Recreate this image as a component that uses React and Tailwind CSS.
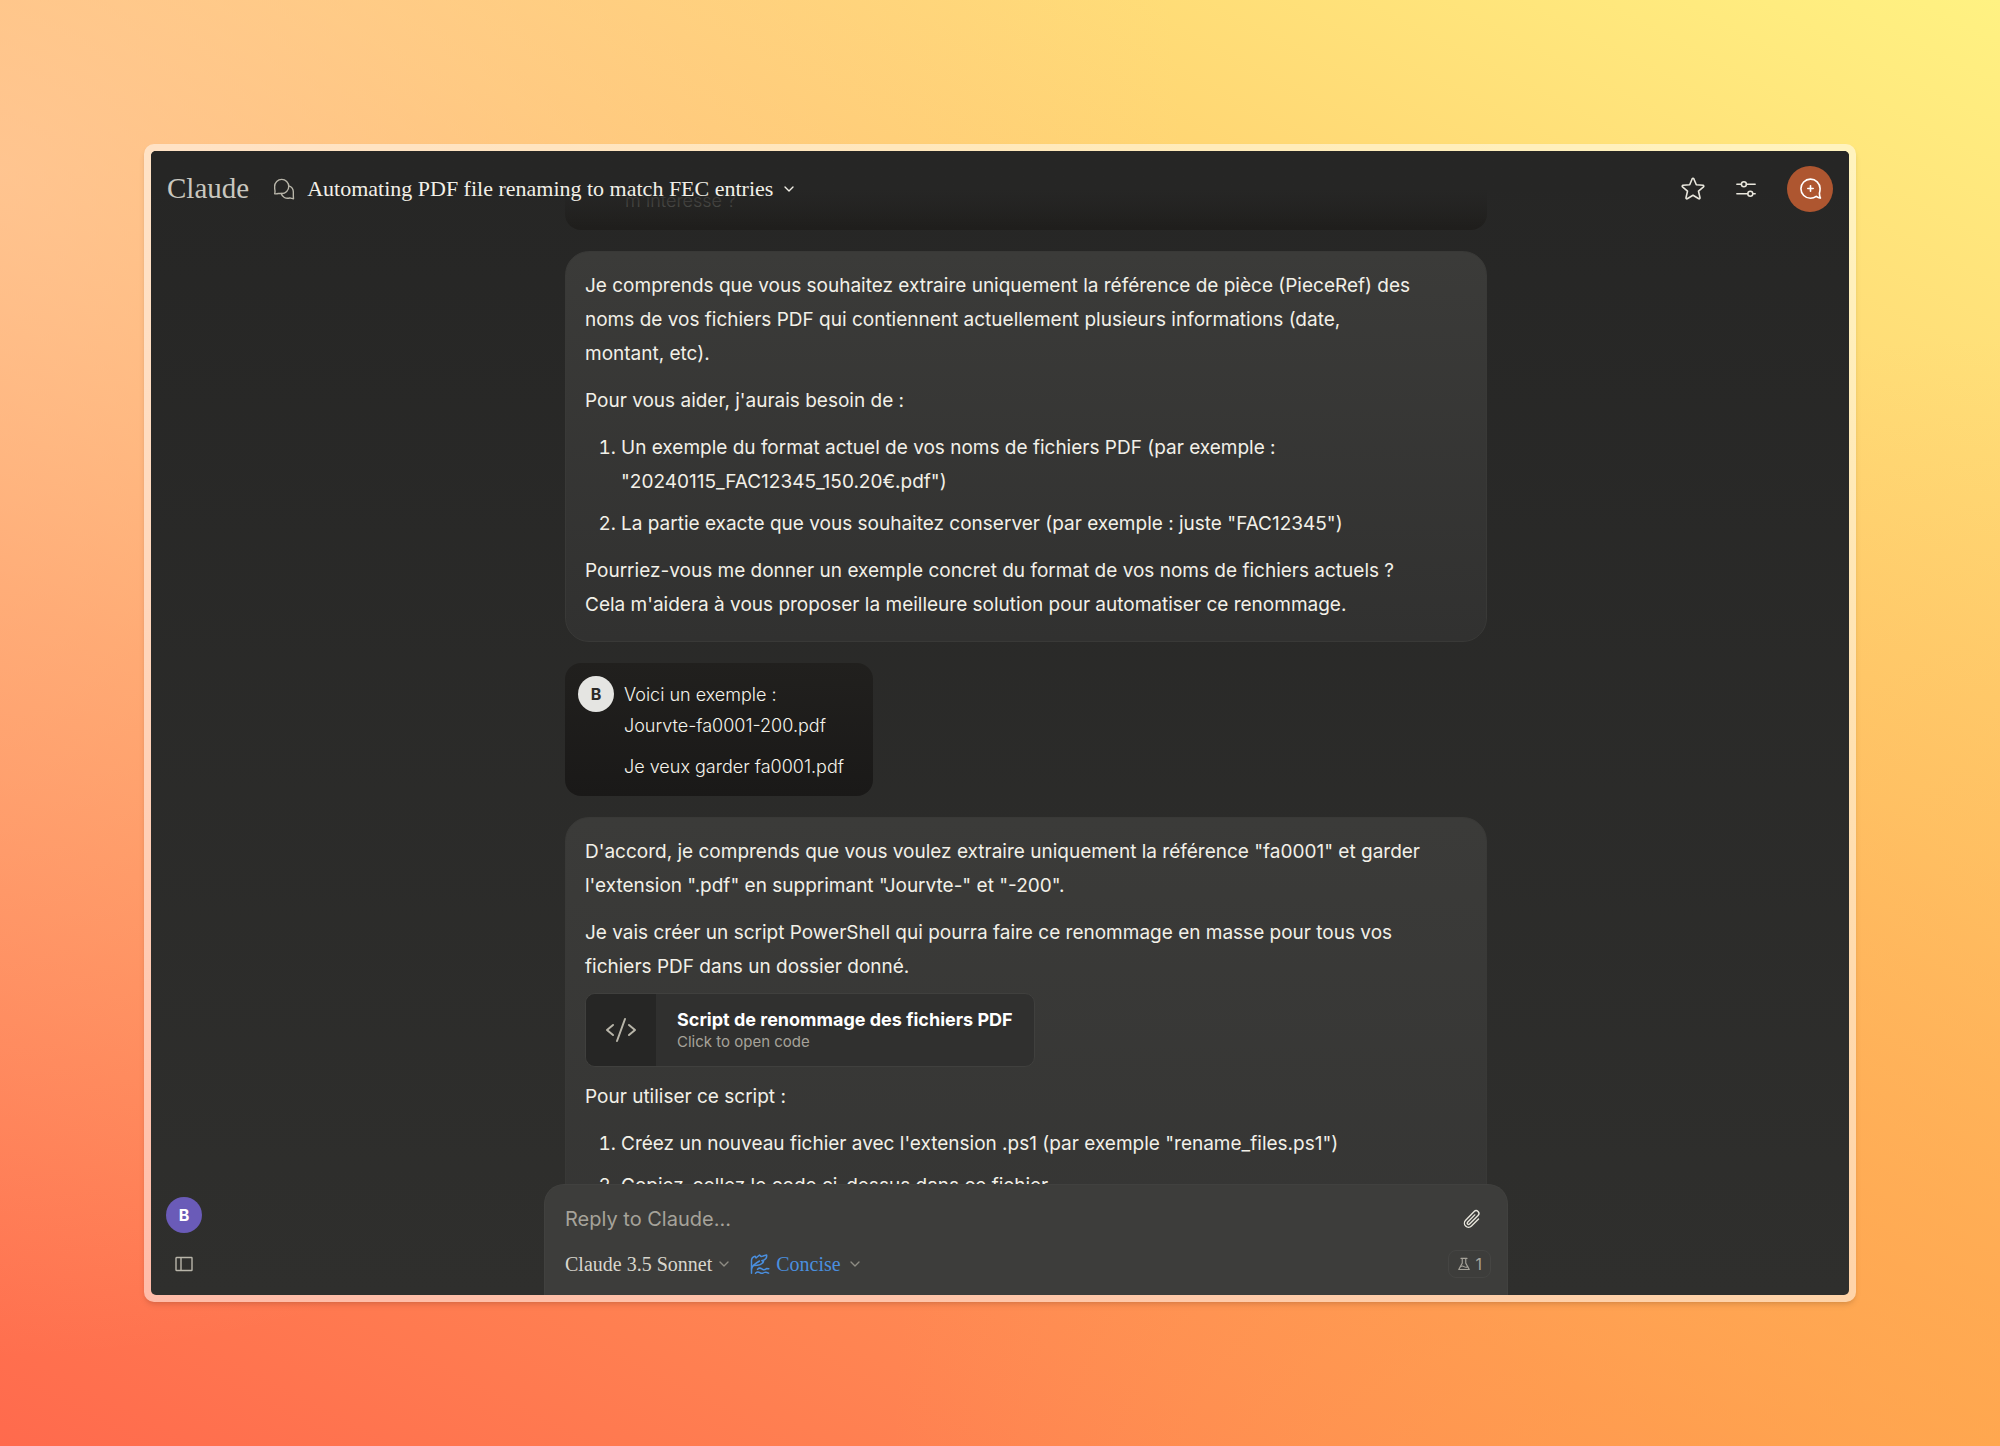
import { useState } from 'react';
import { clsx } from 'clsx';
import { ChevronDown } from 'lucide-react';
import { PiCode, PiPaperclip } from 'react-icons/pi';

const FIRST_STEPS = [
  'Un exemple du format actuel de vos noms de fichiers PDF (par exemple : "20240115_FAC12345_150.20€.pdf")',
  'La partie exacte que vous souhaitez conserver (par exemple : juste "FAC12345")',
];

const SCRIPT_STEPS = [
  'Créez un nouveau fichier avec l\'extension .ps1 (par exemple "rename_files.ps1")',
  'Copiez-collez le code ci-dessus dans ce fichier',
];

function ChatsIcon({ className }) {
  return (
    <svg className={className} viewBox="0 0 24 24" fill="none" stroke="currentColor" strokeWidth="1.5" strokeLinecap="round" strokeLinejoin="round">
      <path d="M1.8 17.200C2.300 16 2.300 14.500 2.100 13.300C1.800 12 1.800 10.500 1.800 9.200A7.700 7.700 0 1 1 9.500 16.900H5.800C4.500 17.300 3.200 17.500 1.800 17.200Z" />
      <path d="M17.200 8.600C20.300 9.600 22.200 12.300 22.200 15.400C22.200 17 22 18.500 22.400 22.600C20.800 22.600 19.500 22.300 18.300 21.800C13.800 23 10 20.800 9 16.900" />
    </svg>
  );
}

function StarIcon({ className }) {
  return (
    <svg className={className} viewBox="0 0 24 24" fill="none" stroke="currentColor" strokeWidth="1.6" strokeLinejoin="round">
      <path d="M11.2 1.700a.9.9 0 0 1 1.600 0l2.500 6 6.700.6c.8.1 1.100 1 .5 1.500l-5 4.400 1.500 6.600c.2.8-.6 1.300-1.200.9L12 18.200l-5.800 3.500c-.6.4-1.400-.1-1.200-.9l1.500-6.600-5-4.400c-.6-.5-.3-1.400.5-1.500l6.700-.6z" />
    </svg>
  );
}

function SlidersIcon({ className }) {
  return (
    <svg className={className} viewBox="0 0 24 24" fill="none" stroke="currentColor" strokeWidth="1.6" strokeLinecap="round">
      <path d="M2 6.800H7M12.400 6.800H22M2 17.200H14M19.400 17.200H22" />
      <circle cx="9.700" cy="6.800" r="2.700" />
      <circle cx="16.700" cy="17.200" r="2.700" />
    </svg>
  );
}

function NewChatIcon({ className }) {
  return (
    <svg className={className} viewBox="0 0 24 24" fill="none" stroke="currentColor" strokeWidth="1.700" strokeLinecap="round" strokeLinejoin="round">
      <path d="M22 12A10 10 0 1 0 12 22.200C14.300 22.200 16.300 21.500 18 20.300C19.200 21.300 20.600 22 22.400 22C21.700 20.500 21.300 18.800 21.300 17C21.800 15.500 22 13.700 22 12Z" />
      <path d="M12 9.200V14.800M9.200 12H14.800" />
    </svg>
  );
}

function QuillIcon({ className }) {
  return (
    <svg className={className} viewBox="0 0 20 20" fill="none" stroke="currentColor" strokeWidth="1.500" strokeLinecap="round" strokeLinejoin="round">
      <path d="M1.500 19.200V15C2 12 5 9.500 9.500 7" />
      <path d="M1.500 15V6.500C1.500 4.300 3 2.800 5.200 2.200L6 4L9.500 1L11.200 2.600L16.600 0.900C17 3.500 16 5.200 14 6L11.800 6.600L13.500 7.600C12.500 9.800 9 11.600 4 11.600" />
      <path d="M7.500 15.200C9 13.800 10.400 13.800 11.800 14.900S15 15.800 16.500 14.600L18.800 14.800" />
      <path d="M5.500 19.200C7 17.800 8.400 17.800 9.800 18.700S12.800 19.500 14.300 18.500S17.200 18.400 18.600 19.200" />
    </svg>
  );
}

function FlaskIcon({ className }) {
  return (
    <svg className={className} viewBox="0 0 16 16" fill="none" stroke="currentColor" strokeWidth="1.300" strokeLinecap="round" strokeLinejoin="round">
      <path d="M4.500 1.500H11.500M6 1.500V7L2 14.300H14L10 7V1.500" />
      <path d="M4 11C5.500 10 6.800 10.200 8 11S10.800 12 12.200 11.200" />
    </svg>
  );
}

function PanelIcon({ className }) {
  return (
    <svg className={className} viewBox="0 0 18 16" fill="none" stroke="currentColor" strokeWidth="1.400">
      <rect x="1" y="1.500" width="16" height="13" rx="0.500" />
      <path d="M6 1.500V14.500" />
    </svg>
  );
}

function AssistantMessage({ className, children }) {
  return (
    <article className={clsx("shrink-0 space-y-[13px] rounded-3xl border border-[#393937] bg-linear-to-b from-[#3b3b39] to-[#313130] px-[19px] pt-[17px] pb-[19px] text-[19px] leading-[34px] text-[#f2f0e8]", className)}>
      {children}
    </article>
  );
}

function Steps({ items }) {
  return (
    <ol className="list-decimal space-y-2 pl-9">
      {items.map((item) => (
        <li key={item}>{item}</li>
      ))}
    </ol>
  );
}

export default function App() {
  const [reply, setReply] = useState('');

  return (
    <div className="h-screen bg-[radial-gradient(circle_at_0%_12%,#ffcfa8a6,transparent_50%),radial-gradient(circle_at_100%_100%,#ffac489c,transparent_45%),linear-gradient(27deg,#ff6a4d,#ff9455_35%,#ffc76c_65%,#fff282)] p-36 font-['Inter',sans-serif]">
      <div className="h-full rounded-[10px] bg-white/50 p-[7px] shadow-md">
        <div className="relative flex h-full overflow-hidden rounded-[5px] bg-linear-to-b from-[#262625] to-[#2f2f2d]">
          {/* Top bar */}
          <header className="absolute inset-x-0 top-0 z-10 flex h-[75px] items-center bg-linear-to-b from-[#262625] from-50% to-transparent px-4 font-['Liberation_Serif',serif]">
            <a href="#home" className="text-[29px] text-[#c9c7bf]">Claude</a>
            <ChatsIcon className="ml-6 size-[22px] text-[#b8b5a9]" />
            <button type="button" className="ml-3 flex items-center gap-2 text-[22px] text-[#f2f0e8]">
              Automating PDF file renaming to match FEC entries
              <ChevronDown className="size-4" strokeWidth={2} />
            </button>
            <div className="ml-auto flex items-center text-[#e8e6dc]">
              <button type="button" aria-label="Star" className="p-4">
                <StarIcon className="size-6" />
              </button>
              <button type="button" aria-label="Settings" className="p-3.5">
                <SlidersIcon className="size-[22px]" />
              </button>
              <button type="button" aria-label="New chat" className="ml-4 flex size-[46px] items-center justify-center rounded-full bg-[#ae5630] text-white">
                <NewChatIcon className="size-[23px]" />
              </button>
            </div>
          </header>

          {/* Side rail */}
          <aside className="flex w-[52px] shrink-0 flex-col items-center justify-end gap-[23px] pb-[23px] pl-3.5">
            <button type="button" className="size-9 shrink-0 rounded-full bg-[#6a5bb8] text-base font-bold text-white">B</button>
            <button type="button" aria-label="Open sidebar" className="text-[#b8b5a9]">
              <PanelIcon className="h-4 w-[18px]" />
            </button>
          </aside>

          <main className="flex min-w-0 flex-1 flex-col items-center">
            {/* Conversation */}
            <div className="flex min-h-0 w-full max-w-[922px] flex-1 flex-col gap-[21px] overflow-hidden">
              <article className="flex h-[79px] shrink-0 items-end rounded-b-2xl bg-linear-to-b from-[#262625] to-[#1f1e1c] px-[60px] pb-3.5 text-[18px] leading-[31px] font-light text-[#e5e3da]/40">
                m'intéresse ?
              </article>

              <AssistantMessage>
                <p>
                  Je comprends que vous souhaitez extraire uniquement la référence de pièce (PieceRef) des<br />
                  noms de vos fichiers PDF qui contiennent actuellement plusieurs informations (date,<br />
                  montant, etc).
                </p>
                <p>Pour vous aider, j'aurais besoin de :</p>
                <Steps items={FIRST_STEPS} />
                <p>
                  Pourriez-vous me donner un exemple concret du format de vos noms de fichiers actuels ?<br />
                  Cela m'aidera à vous proposer la meilleure solution pour automatiser ce renommage.
                </p>
              </AssistantMessage>

              <article className="flex shrink-0 gap-2.5 self-start rounded-2xl bg-linear-to-b from-[#21201e] to-[#1a1918] pt-[13px] pr-[29px] pb-3.5 pl-[13px]">
                <div className="flex size-9 items-center justify-center rounded-full bg-[#e5e5e2] text-base font-bold text-[#2b2a27]">B</div>
                <div className="space-y-2.5 pt-[3px] text-[18px] leading-[31px] font-light text-[#f5f3eb]">
                  <p>
                    Voici un exemple :<br />
                    Jourvte-fa0001-200.pdf
                  </p>
                  <p>Je veux garder fa0001.pdf</p>
                </div>
              </article>

              <AssistantMessage className="min-h-[760px]">
                <p>
                  D'accord, je comprends que vous voulez extraire uniquement la référence "fa0001" et garder<br />
                  l'extension ".pdf" en supprimant "Jourvte-" et "-200".
                </p>
                <div>
                  <p>
                    Je vais créer un script PowerShell qui pourra faire ce renommage en masse pour tous vos<br />
                    fichiers PDF dans un dossier donné.
                  </p>
                  <button type="button" className="mt-[9px] flex h-[74px] items-stretch overflow-hidden rounded-[10px] border border-[#40403e] bg-[#30302f] text-left">
                    <span className="flex w-[70px] items-center justify-center bg-[#262625] text-[#b8b5a9]">
                      <PiCode className="size-8" />
                    </span>
                    <span className="flex flex-col justify-center px-[21px]">
                      <span className="text-[18px] leading-6 font-bold text-white">Script de renommage des fichiers PDF</span>
                      <span className="text-[15px] leading-5 text-[#a6a39a]">Click to open code</span>
                    </span>
                  </button>
                </div>
                <p>Pour utiliser ce script :</p>
                <Steps items={SCRIPT_STEPS} />
              </AssistantMessage>
            </div>

            {/* Composer */}
            <form className="w-full max-w-[964px] shrink-0 rounded-t-[20px] border border-b-0 border-[#41413f] bg-[#3d3d3b] py-4 pr-4 pl-5" onSubmit={(e) => e.preventDefault()}>
              <div className="flex items-center">
                <input
                  type="text"
                  aria-label="Reply to Claude"
                  placeholder="Reply to Claude..."
                  value={reply}
                  onChange={(e) => setReply(e.target.value)}
                  className="h-9 min-w-0 flex-1 bg-transparent text-[20px] outline-none placeholder:text-[#a6a39a]"
                />
                <button type="button" aria-label="Attach file" className="mr-2 text-[#e8e6dc]">
                  <PiPaperclip className="size-[22px]" />
                </button>
              </div>
              <div className="mt-3 flex h-[30px] items-center gap-[18px] font-['Liberation_Serif',serif] text-[20px]">
                <button type="button" className="flex items-center gap-1 text-[#d8d6cd]">
                  Claude 3.5 Sonnet
                  <ChevronDown className="size-4 text-[#8f8d84]" strokeWidth={2} />
                </button>
                <button type="button" className="flex items-center gap-1.5 text-[#4a8fdf]">
                  <QuillIcon className="size-5" />
                  Concise
                  <ChevronDown className="size-4 text-[#8f8d84]" strokeWidth={2} />
                </button>
                <button type="button" className="ml-auto flex h-7 items-center gap-1 rounded-lg border border-[#454543] px-2 font-['Inter',sans-serif] text-base text-[#a6a39a]">
                  <FlaskIcon className="size-3.5" />1
                </button>
              </div>
            </form>
          </main>
        </div>
      </div>
    </div>
  );
}
